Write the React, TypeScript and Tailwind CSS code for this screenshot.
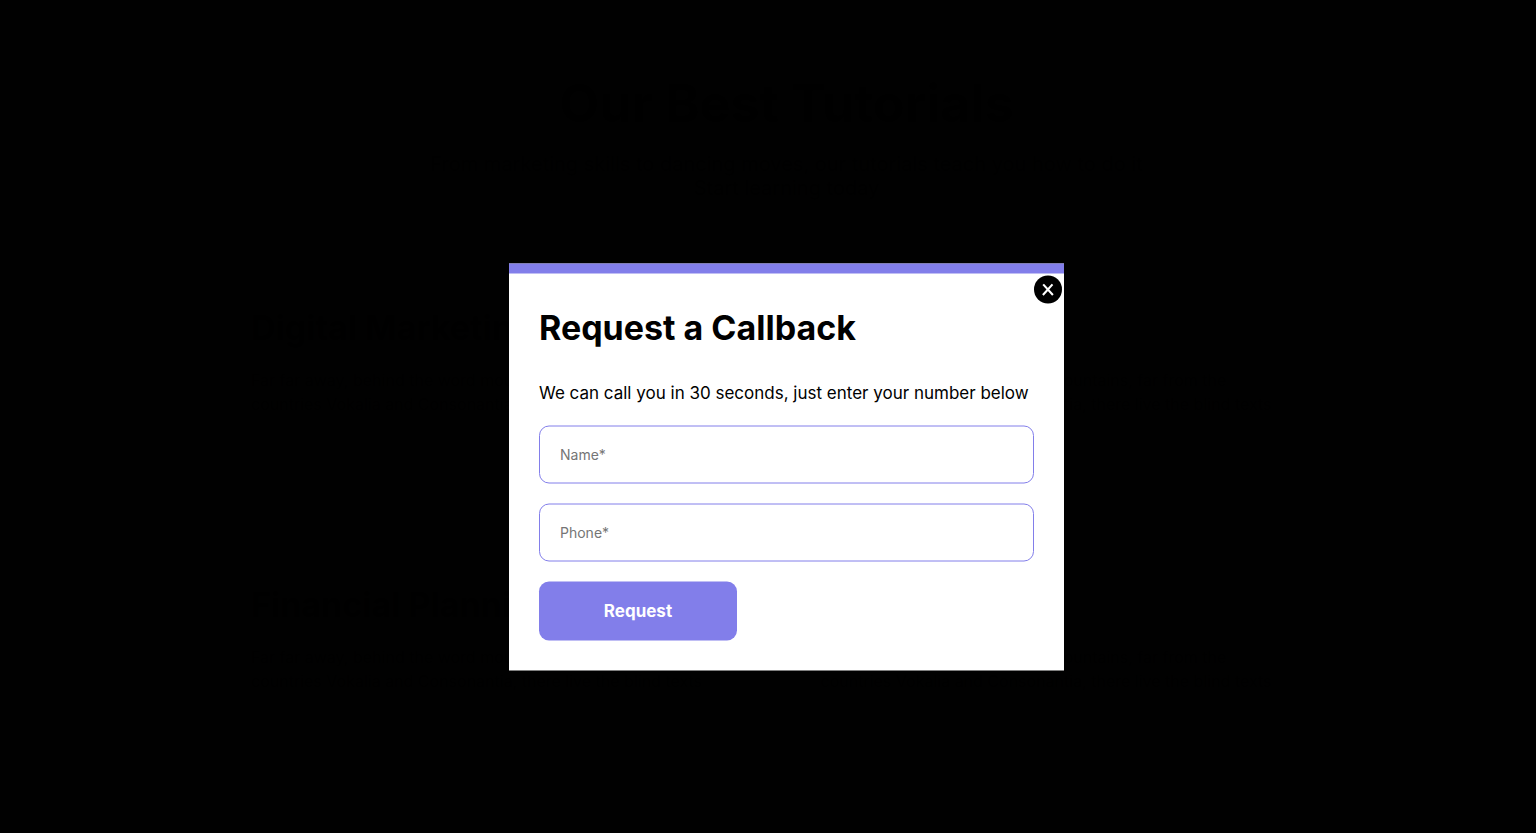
const inputClass =
  "block h-[58px] w-full rounded-[10px] border border-[#827eea] bg-white px-5 pb-[2px] text-sm text-black outline-none placeholder:text-[#757575]";

const cards = [
  { id: 1, title: "Digital Marketing" },
  { id: 2, title: "" },
  { id: 3, title: "Financial Planning" },
  { id: 4, title: "" },
];

function Tutorials() {
  return (
    <main aria-hidden="true" className="h-screen overflow-hidden bg-white pt-[74px] pl-[37px] text-black">
      <h2 className="text-center text-[52px] leading-[60px] font-bold">Our Best Tutorials</h2>
      <p className="pt-[18px] text-center text-xl leading-6">
        From marketing skills to dancing moves, our tutorials teach you how to do it
        <br />
        Start learning today
      </p>
      <div className="mx-auto grid max-w-[1111px] grid-cols-2 gap-x-7 gap-y-8 pt-[80px]">
        {cards.map((card) => (
          <article key={card.id} className="h-[245px] rounded-[20px] bg-[#f3f2ff] px-5 pt-7">
            <h3 className="h-10 text-[34px] leading-10 font-bold">{card.title}</h3>
            <p className="pt-5 text-base leading-6">
              Far far away, behind the word mountains, far from the
              <br />
              countries Vokalia and Consonantia, there live the blind texts
            </p>
          </article>
        ))}
      </div>
    </main>
  );
}

export default function App() {
  return (
    <div className="min-h-screen bg-black font-['Inter',sans-serif]">
      <Tutorials />
      <div className="fixed inset-0 bg-black/[0.996] pt-[101px] pl-[37px]">
        <div className="flex h-full items-start justify-center">
          <section
            role="dialog"
            aria-labelledby="callback-title"
            className="relative top-1/2 w-[555px] max-w-full -translate-y-1/2 border-t-10 border-[#827eea] bg-white px-[30px] pb-[30px] text-black"
          >
            <button
              type="button"
              aria-label="Close"
              className="absolute top-[2px] right-[2px] flex size-7 items-center justify-center rounded-full bg-black text-white"
            >
              <svg viewBox="0 0 28 28" className="size-7" fill="none" stroke="currentColor" strokeWidth="2.1">
                <path d="M9.2 8.9 L18.9 19.5 M18.5 8.9 L8.9 19.5" />
              </svg>
            </button>
            <h1 id="callback-title" className="pt-[34px] text-[34px] leading-10 font-bold">
              Request a Callback
            </h1>
            <p className="pt-[35px] pb-[23px] text-[17px] leading-5">
              We can call you in 30 seconds, just enter your number below
            </p>
            <form className="flex flex-col gap-5">
              <input aria-label="Name" placeholder="Name*" className={inputClass} />
              <input aria-label="Phone" type="tel" placeholder="Phone*" className={inputClass} />
              <button
                type="button"
                className="h-[59px] w-2/5 rounded-[10px] bg-[#827eea] text-[17px] font-bold text-white"
              >
                Request
              </button>
            </form>
          </section>
        </div>
      </div>
    </div>
  );
}
